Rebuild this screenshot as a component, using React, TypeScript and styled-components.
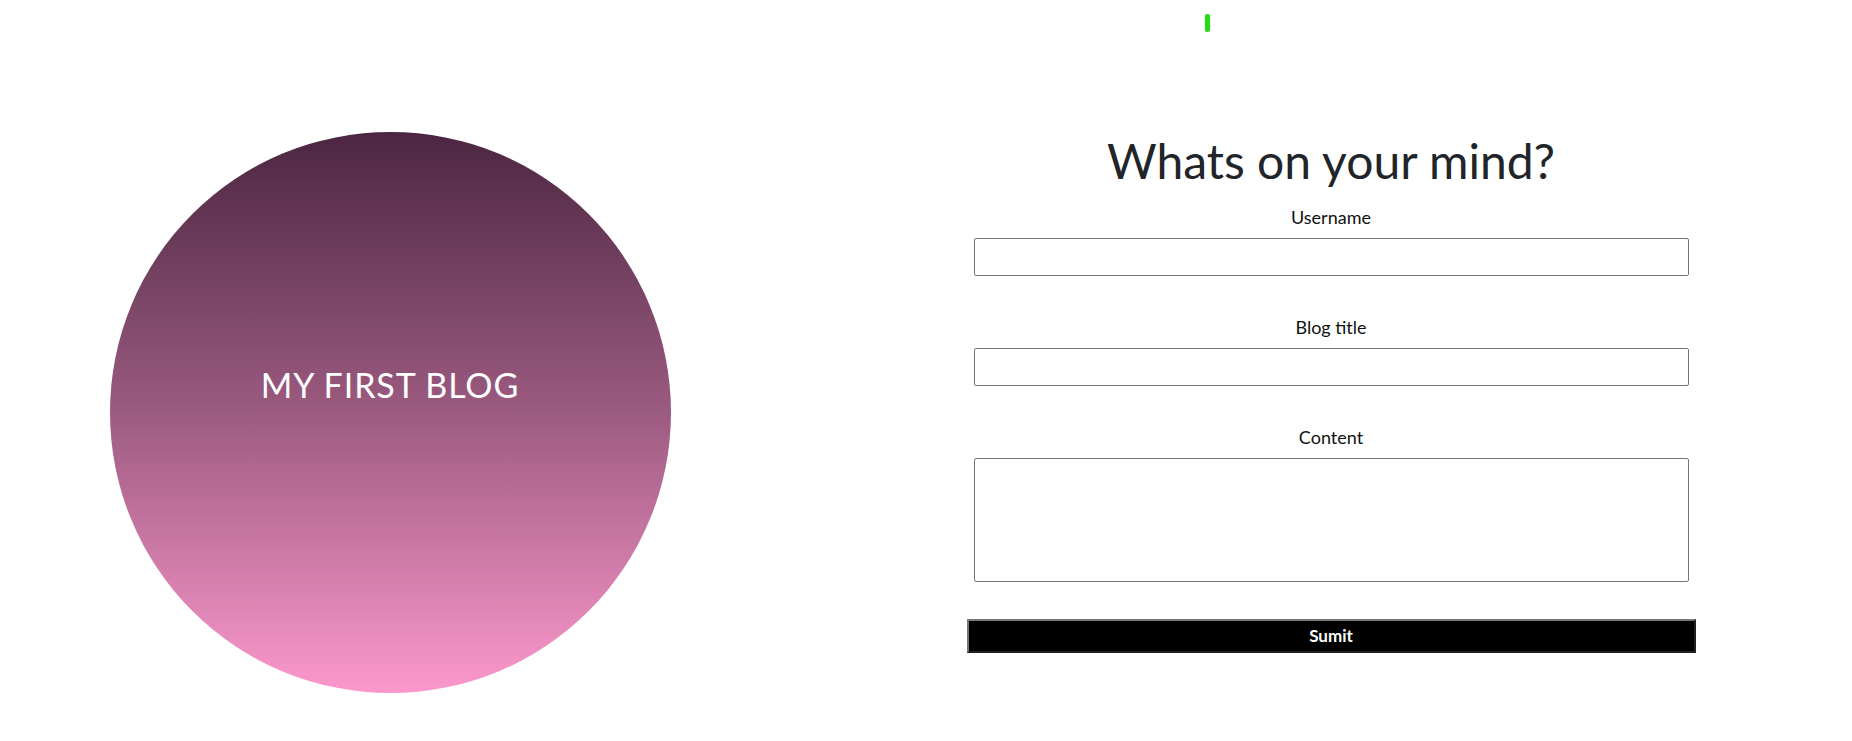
import React from "react";
import styled, { createGlobalStyle } from "styled-components";

const GlobalStyle = createGlobalStyle`
  html, body {
    margin: 0;
    padding: 0;
    background: #ffffff;
    font-family: Lato, "Open Sans", Arial, sans-serif;
  }
  * { box-sizing: border-box; }
`;

const Page = styled.div`
  position: relative;
  width: 100%;
  min-height: 741px;
`;

const LoadingBar = styled.div`
  position: absolute;
  left: 1205px;
  top: 14px;
  width: 5px;
  height: 18px;
  border-radius: 2px;
  background: #22dd11;
`;

const Layout = styled.main`
  display: grid;
  grid-template-columns: 780px 1fr;
  align-items: start;
  padding-top: 132px;
`;

const HeroColumn = styled.section`
  display: flex;
  justify-content: center;
`;

const Circle = styled.div`
  width: 561px;
  height: 561px;
  border-radius: 50%;
  background: linear-gradient(to bottom, #4b2641 0%, #9c5b80 50%, #fc98cc 100%);
  display: flex;
  align-items: center;
  justify-content: center;
  padding-bottom: 54px;
`;

const HeroTitle = styled.h1`
  margin: 0;
  font-family: Lato, "Open Sans", Arial, sans-serif;
  font-weight: 400;
  font-size: 34px;
  line-height: 1.2;
  color: #ffffff;
  letter-spacing: 0.9px;
`;

const FormColumn = styled.section`
  display: flex;
  justify-content: center;
  padding-left: 30px;
`;

const Form = styled.form`
  width: 729px;
  display: flex;
  flex-direction: column;
  align-items: stretch;
`;

const Heading = styled.h2`
  margin: 0 0 16px;
  font-family: Lato, "Open Sans", Arial, sans-serif;
  font-weight: 400;
  font-size: 48px;
  line-height: 1.2;
  color: #212529;
  text-align: center;
`;

const Field = styled.div<{ $gap: number }>`
  display: flex;
  flex-direction: column;
  align-items: center;
  padding: 0 7px;
  margin-bottom: ${(p) => p.$gap}px;
`;

const Label = styled.label`
  display: block;
  font-size: 18px;
  line-height: 22px;
  color: #111111;
  text-align: center;
  margin-bottom: 10px;
`;

const TextInput = styled.input`
  width: 100%;
  height: 38px;
  border: 1px solid #767676;
  border-radius: 2px;
  background: #ffffff;
  font-family: inherit;
  font-size: 16px;
  padding: 0 6px;
`;

const TextArea = styled.textarea`
  width: 100%;
  height: 124px;
  border: 1px solid #767676;
  border-radius: 2px;
  background: #ffffff;
  font-family: inherit;
  font-size: 16px;
  padding: 4px 6px;
  resize: none;
  display: block;
`;

const SubmitButton = styled.button`
  width: 100%;
  height: 34px;
  background: #000000;
  color: #ffffff;
  border: 2px outset #767676;
  font-family: Lato, "Open Sans", Arial, sans-serif;
  font-weight: 700;
  font-size: 17px;
  line-height: 1;
  padding: 0;
  cursor: pointer;
`;

export default function App() {
  return (
    <>
      <GlobalStyle />
      <Page>
        <LoadingBar />
        <Layout>
          <HeroColumn>
            <Circle>
              <HeroTitle>MY FIRST BLOG</HeroTitle>
            </Circle>
          </HeroColumn>
          <FormColumn>
            <Form onSubmit={(e) => e.preventDefault()}>
              <Heading>Whats on your mind?</Heading>
              <Field $gap={40}>
                <Label htmlFor="username">Username</Label>
                <TextInput id="username" type="text" />
              </Field>
              <Field $gap={40}>
                <Label htmlFor="title">Blog title</Label>
                <TextInput id="title" type="text" />
              </Field>
              <Field $gap={37}>
                <Label htmlFor="content">Content</Label>
                <TextArea id="content" />
              </Field>
              <SubmitButton type="submit">Sumit</SubmitButton>
            </Form>
          </FormColumn>
        </Layout>
      </Page>
    </>
  );
}
